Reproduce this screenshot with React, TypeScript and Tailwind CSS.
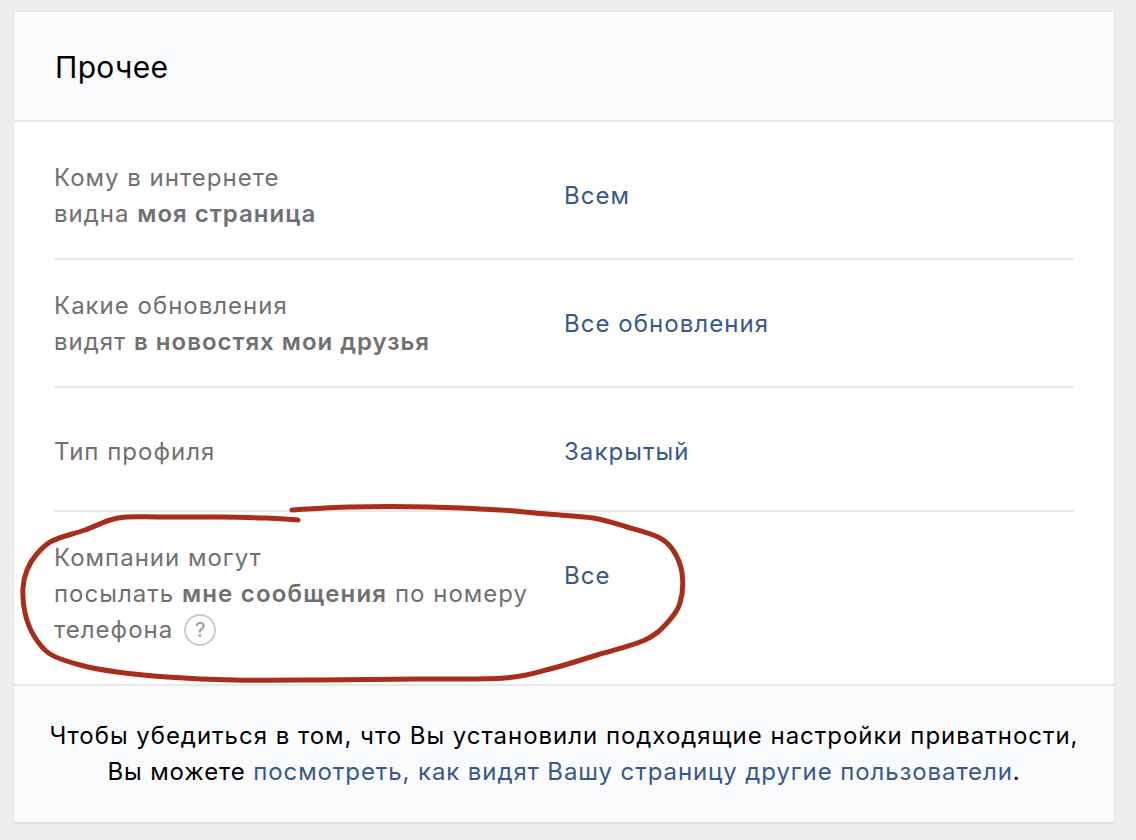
import React from 'react';

interface Row {
  id: number;
  value: string;
  className: string;
  label: React.ReactNode;
}

const rows: Row[] = [
  {
    id: 1,
    value: 'Всем',
    className: 'h-[138px] pt-[12px]',
    label: (
      <>
        Кому в интернете
        <br />
        видна <b className="font-semibold">моя страница</b>
      </>
    ),
  },
  {
    id: 2,
    value: 'Все обновления',
    className: 'h-[128px] pt-[2px]',
    label: (
      <>
        Какие обновления
        <br />
        видят <b className="font-semibold">в новостях мои друзья</b>
      </>
    ),
  },
  {
    id: 3,
    value: 'Закрытый',
    className: 'h-[124px] pt-[6px]',
    label: <>Тип профиля</>,
  },
];

// points of the red marker line, traced from the picture
const marker: [number, number][] = [
  [298, 520], [265, 518], [220, 517], [160, 517], [118, 518], [85, 530], [52, 541], [36, 555], [27, 570],
  [23, 588], [25, 613], [34, 636], [50, 654], [80, 665], [117, 672], [167, 677], [233, 680], [320, 680],
  [420, 679], [505, 678], [550, 669], [597, 655], [645, 640], [667, 623], [680, 603], [682, 573],
  [673, 550], [658, 537], [627, 527], [593, 518], [547, 514], [500, 510], [430, 507], [350, 507], [292, 510],
];

const smoothPath = (pts: [number, number][]) => {
  let d = `M${pts[0][0]} ${pts[0][1]}`;
  for (let i = 0; i < pts.length - 1; i++) {
    const p0 = pts[Math.max(i - 1, 0)];
    const p1 = pts[i];
    const p2 = pts[i + 1];
    const p3 = pts[Math.min(i + 2, pts.length - 1)];
    d += ` C${p1[0] + (p2[0] - p0[0]) / 6} ${p1[1] + (p2[1] - p0[1]) / 6} ${p2[0] - (p3[0] - p1[0]) / 6} ${p2[1] - (p3[1] - p1[1]) / 6} ${p2[0]} ${p2[1]}`;
  }
  return d;
};

const App: React.FC = () => {
  return (
    <div className="relative h-[840px] w-[1136px] overflow-hidden bg-[#edeef0] pt-[11px] pl-[13px] font-['Inter','Noto_Sans',sans-serif] text-[24px] leading-[36px]">
      <div className="w-[1102px] overflow-hidden rounded-[3px] border border-[#e3e4e8] border-b-2 border-b-[#dcdde1] bg-white">
        {/* Header */}
        <div className="flex h-[110px] items-center border-b-2 border-[#e7e8ec] bg-[#fafbfc] pt-[2px] pl-[41px] text-[30px] tracking-[0.35px] text-black">
          Прочее
        </div>

        {/* Settings rows */}
        <div className="px-[40px]">
          {rows.map((row) => (
            <div key={row.id} className={`flex items-center border-b-2 border-[#e7e8ec] ${row.className}`}>
              <div className="w-[510px] tracking-[1px] text-[#6f7072]">{row.label}</div>
              <div className="tracking-[1.05px] text-[#36588a]">{row.value}</div>
            </div>
          ))}
          <div className="flex h-[172px] items-center pb-[8px]">
            <div className="w-[510px] tracking-[1px] text-[#6f7072]">
              Компании могут
              <br />
              посылать <b className="font-semibold tracking-[1.2px]">мне сообщения</b> по номеру
              <br />
              <span className="inline-flex items-center gap-[11px]">
                телефона
                <span className="flex h-[32px] w-[32px] items-center justify-center rounded-full border-2 border-[#c5ccd6] text-[20px] font-medium tracking-normal text-[#9aa1ab]">
                  ?
                </span>
              </span>
            </div>
            <div className="-mt-[36px] tracking-[1.05px] text-[#36588a]">Все</div>
          </div>
        </div>

        {/* Footer */}
        <div className="flex h-[138px] items-center justify-center border-t-2 border-[#e7e8ec] bg-[#fafbfc] text-center tracking-[0.97px] text-black">
          <p>
            Чтобы убедиться в том, что Вы установили подходящие настройки приватности,
            <br />
            <span className="tracking-[0.9px]">
              Вы можете <span className="text-[#36588a]">посмотреть, как видят Вашу страницу другие пользователи</span>.
            </span>
          </p>
        </div>
      </div>

      {/* Hand-drawn annotation */}
      <svg className="absolute top-0 left-0" width="1136" height="840" viewBox="0 0 1136 840" fill="none">
        <path d={smoothPath(marker)} stroke="#a92d1b" strokeWidth="5" strokeLinecap="round" strokeLinejoin="round" />
      </svg>
    </div>
  );
};

export default App;
